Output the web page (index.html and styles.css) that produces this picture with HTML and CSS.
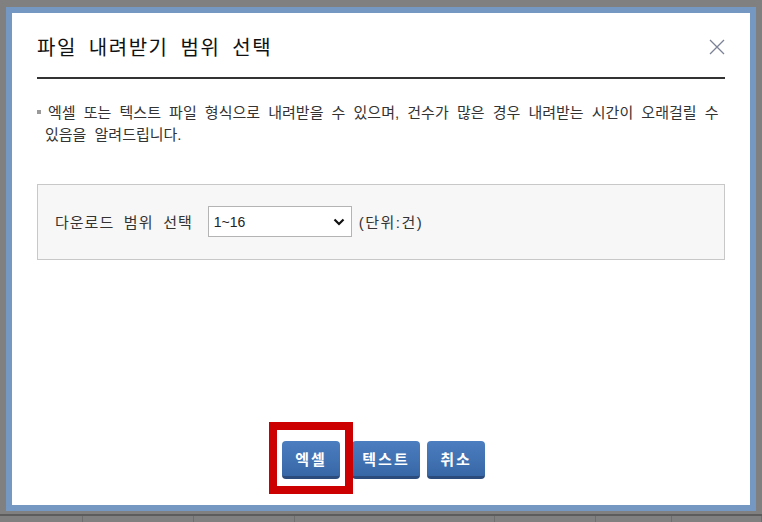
FILE: index.html
```html
<!DOCTYPE html>
<html lang="ko">
<head>
<meta charset="utf-8">
<title>파일 내려받기 범위 선택</title>
<link rel="stylesheet" href="styles.css">
</head>
<body>
<div class="dialog">
  <div class="dialog-inner">
    <div class="header">
      <h1 class="title">파일 내려받기 범위 선택</h1>
      <button class="close" aria-label="닫기">
        <svg width="16" height="16" viewBox="0 0 16 16"><path d="M1 1L15 15M15 1L1 15" stroke="#7b8196" stroke-width="1.3" fill="none"/></svg>
      </button>
    </div>
    <p class="notice"><span class="bullet"></span>엑셀 또는 텍스트 파일 형식으로 내려받을 수 있으며, 건수가 많은 경우 내려받는 시간이 오래걸릴 수 있음을 알려드립니다.</p>
    <div class="range-box">
      <span class="label">다운로드 범위 선택</span>
      <div class="select-wrap">
        <select class="select"><option>1~16</option></select>
        <svg class="chevron" width="12" height="8" viewBox="0 0 12 8"><path d="M1.5 1.5L6 6L10.5 1.5" stroke="#111" stroke-width="2.2" fill="none"/></svg>
      </div>
      <span class="unit">(단위:건)</span>
    </div>
    <div class="buttons">
      <div class="btn-hl">
        <button class="btn">엑셀</button>
        <span class="highlight"></span>
      </div>
      <button class="btn btn-wide">텍스트</button>
      <button class="btn btn-last">취소</button>
    </div>
  </div>
</div>
<div class="under-row">
  <span class="cell c1"></span><span class="cell c2"></span><span class="cell c3"></span><span class="cell c4"></span><span class="cell c5"></span><span class="cell c6"></span><span class="cell c7"></span>
</div>
</body>
</html>
```
FILE: styles.css
```css
html, body {
  margin: 0;
  padding: 0;
}
body {
  background: #808080;
  width: 762px;
  height: 522px;
  overflow: hidden;
  font-family: "Liberation Sans", "Noto Sans CJK KR", sans-serif;
  color: #333;
  padding-top: 7px;
  box-sizing: border-box;
  word-break: keep-all;
}
.dialog {
  margin-left: 6px;
  width: 750px;
  height: 504px;
  box-sizing: border-box;
  border: 6px solid #7598c3;
  background: #fff;
}
.dialog-inner {
  height: 100%;
  box-sizing: border-box;
  padding: 25px 25px 26px 25px;
  display: flex;
  flex-direction: column;
}
.header {
  display: flex;
  justify-content: space-between;
  align-items: flex-start;
  border-bottom: 2px solid #333;
  padding-bottom: 19px;
}
.title {
  margin: 0;
  font-size: 20px;
  line-height: 20px;
  font-weight: normal;
  color: #111;
  word-spacing: 5px;
  letter-spacing: 1.5px;
}
.close {
  border: 0;
  background: none;
  padding: 0;
  margin: 1px 0 0 0;
  width: 16px;
  height: 16px;
  display: block;
}
.close svg { display: block; }
.notice {
  margin: 23px 0 0 0;
  padding-left: 8px;
  text-indent: -8px;
  font-size: 15px;
  line-height: 22px;
  color: #333;
  word-spacing: 4px;
}
.bullet {
  display: inline-block;
  width: 4px;
  height: 4px;
  background: #9a9a9a;
  margin-right: 7px;
  vertical-align: 4px;
  text-indent: 0;
}
.range-box {
  margin-top: 38px;
  border: 1px solid #c8c8c8;
  background: #f7f7f7;
  display: flex;
  align-items: center;
  padding: 21px 0 22px 17px;
  font-size: 15px;
  color: #333;
}
.label {
  word-spacing: 4.5px;
  letter-spacing: 1px;
  margin-right: 15px;
}
.select-wrap {
  position: relative;
  width: 144px;
  height: 31px;
}
.select {
  appearance: none;
  -webkit-appearance: none;
  width: 144px;
  height: 31px;
  border: 1px solid #b4b4b4;
  background: #fff;
  font-family: "Liberation Sans", sans-serif;
  font-size: 14px;
  color: #222;
  padding: 0 0 0 5px;
  margin: 0;
  border-radius: 0;
}
.chevron {
  position: absolute;
  right: 7px;
  top: 12px;
  pointer-events: none;
}
.unit {
  margin-left: 7px;
  letter-spacing: 1.5px;
}
.buttons {
  margin-top: auto;
  display: flex;
  justify-content: flex-start;
  padding-left: 245px;
}
.btn-hl {
  position: relative;
}
.btn {
  display: block;
  width: 58px;
  height: 38px;
  box-sizing: border-box;
  border: 0;
  border-bottom: 3px solid #2b4b7c;
  border-radius: 4px;
  background: linear-gradient(#4b7ec0, #3867a6);
  color: #fff;
  font-family: "Liberation Sans", "Noto Sans CJK KR", sans-serif;
  font-size: 15px;
  font-weight: bold;
  padding: 0 0 1px 0;
  letter-spacing: 2px;
}
.btn-wide {
  width: 68px;
  margin-left: 12px;
}
.btn-last {
  margin-left: 7px;
}
.highlight {
  position: absolute;
  left: -13px;
  top: -19px;
  width: 84px;
  height: 72px;
  box-sizing: border-box;
  border: 8px solid #cc0000;
  pointer-events: none;
}
.under-row {
  display: flex;
  height: 11px;
  box-sizing: border-box;
  margin-top: 3px;
  border-top: 2px solid #5c5c5c;
}
.cell {
  border-right: 1px solid #6e6e6e;
  height: 100%;
}
.c1 { width: 82px; }
.c2 { width: 110px; }
.c3 { width: 100px; }
.c4 { width: 200px; }
.c5 { width: 100px; }
.c6 { width: 75px; }
.c7 { width: 89px; }
```
